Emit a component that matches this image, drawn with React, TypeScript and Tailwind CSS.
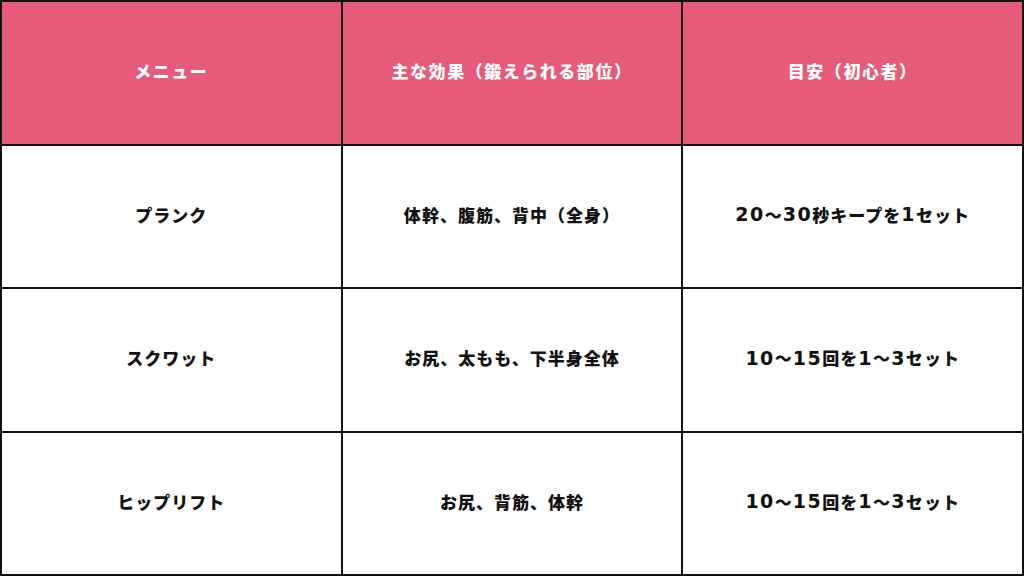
import React from "react";

const header = ["メニュー", "主な効果（鍛えられる部位）", "目安（初心者）"];
const rows = [
  ["プランク", "体幹、腹筋、背中（全身）", "20〜30秒キープを1セット"],
  ["スクワット", "お尻、太もも、下半身全体", "10〜15回を1〜3セット"],
  ["ヒップリフト", "お尻、背筋、体幹", "10〜15回を1〜3セット"],
];

function Txt({ s }: { s: string }) {
  const parts = s.split(/(\d+)/);
  return (
    <>
      {parts.map((p, i) =>
        /^\d+$/.test(p) ? (
          <span
            key={i}
            className="text-[19px] tracking-[1.5px]"
            style={{ fontFamily: '"DejaVu Sans", sans-serif' }}
          >
            {p}
          </span>
        ) : (
          <span key={i}>{p}</span>
        )
      )}
    </>
  );
}

export default function App() {
  return (
    <div
      className="w-[1024px] h-[576px] bg-[#111111] p-[2px] grid grid-cols-3 grid-rows-4 gap-[2px]"
      style={{ fontFamily: '"Noto Sans CJK JP", "Noto Sans", sans-serif' }}
    >
      {header.map((h) => (
        <div
          key={h}
          className="bg-[#e65a7a] flex items-center justify-center pb-[4px] text-white font-black text-[17px] tracking-[0.09em]"
        >
          {h}
        </div>
      ))}
      {rows.map((r) =>
        r.map((c, i) => (
          <div
            key={r[0] + i}
            className="bg-white flex items-center justify-center pb-[4px] text-[#111111] font-black text-[17px] tracking-[0.06em]"
          >
            <Txt s={c} />
          </div>
        ))
      )}
    </div>
  );
}
